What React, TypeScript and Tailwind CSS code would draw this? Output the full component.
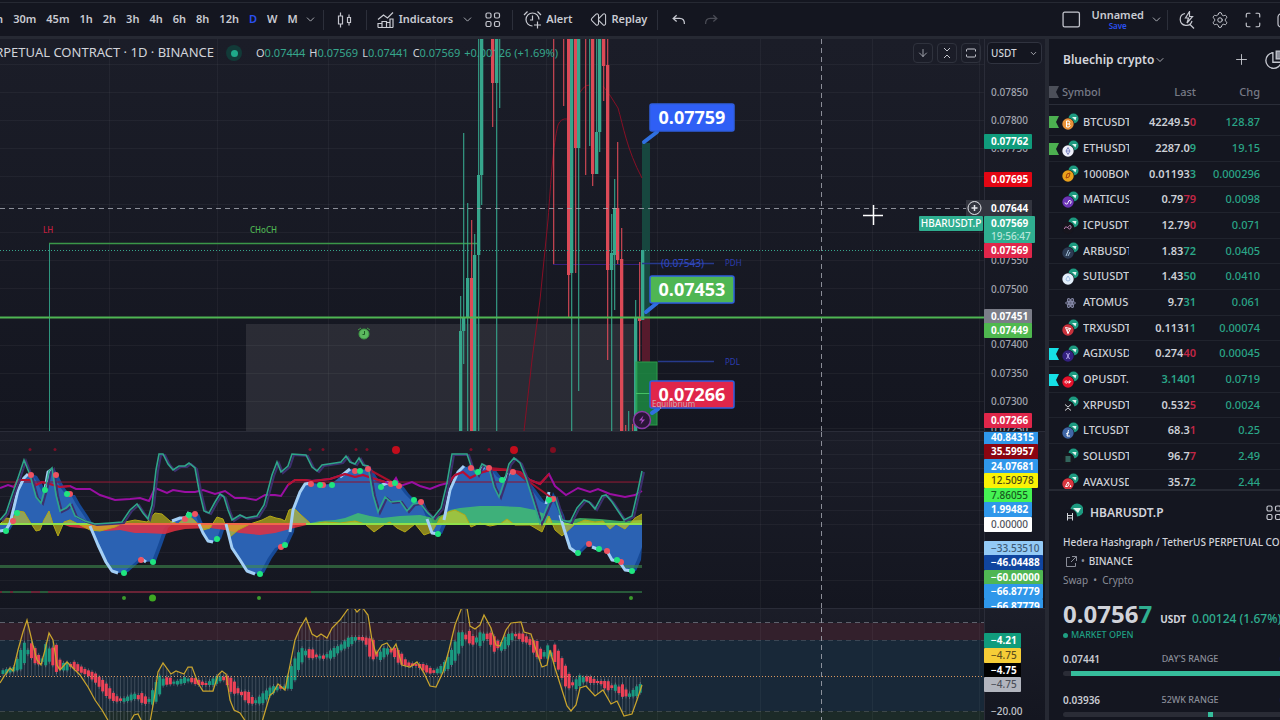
import type { ReactNode } from 'react'
import { ArrowDown, ChevronDown, Maximize, Plus, Rewind, Settings } from 'lucide-react'

type Pt = [number, number]

const UP = '#36a68c'
const DOWN = '#dc4a57'

const intervals = ['15m', '30m', '45m', '1h', '2h', '3h', '4h', '6h', '8h', '12h', 'D', 'W', 'M']

interface Ticker {
  symbol: string
  last: string
  tail: string
  tailUp: boolean
  chg: string
  flag?: string
  coin: string
  glyph?: string
  ink?: string
}

const tickers: Ticker[] = [
  { symbol: 'BTCUSDT.P', last: '42249.5', tail: '0', tailUp: false, chg: '128.87', flag: '#4caf50', coin: '#e8923a', glyph: 'M4.500 8h2.500q1.500 1.500 0 3q2 1.500 0 3H4.500zM4.500 11h3', ink: '#fff' },
  { symbol: 'ETHUSDT.P', last: '2287.0', tail: '9', tailUp: true, chg: '19.15', flag: '#4caf50', coin: '#eef0fa', glyph: 'M6 7.500L8 11L6 14.500L4 11zM4 11h4', ink: '#7b83c4' },
  { symbol: '1000BONK', last: '0.01193', tail: '3', tailUp: true, chg: '0.000296', coin: '#e9a11b', glyph: 'M4 13l1-4 3-1-1 4z', ink: '#a6400c' },
  { symbol: 'MATICUSDT', last: '0.79', tail: '79', tailUp: false, chg: '0.0098', coin: '#6d35b8', glyph: 'M3 11.500a1.500 1.500 0 1 0 3 0l1-2a1.500 1.500 0 1 1 1 3', ink: '#fff' },
  { symbol: 'ICPUSDT.P', last: '12.79', tail: '0', tailUp: false, chg: '0.071', coin: '#17151d', glyph: 'M2.500 12c0-3 3-2 3.500-1s3 2 3-1-2.500-1-3.500 1', ink: '#c98ac0' },
  { symbol: 'ARBUSDT.P', last: '1.83', tail: '72', tailUp: true, chg: '0.0405', coin: '#2b3a52', glyph: 'M4 14l2.500-6M6 14l2-4', ink: '#a7c5dd' },
  { symbol: 'SUIUSDT.P', last: '1.43', tail: '50', tailUp: true, chg: '0.0410', coin: '#e3effb', glyph: 'M6 8l2 3a2 2 0 1 1-4 0z', ink: '#9dbce2' },
  { symbol: 'ATOMUSDT', last: '9.7', tail: '31', tailUp: true, chg: '0.061', coin: 'atom' },
  { symbol: 'TRXUSDT.P', last: '0.1131', tail: '1', tailUp: true, chg: '0.00074', coin: '#c9323c', glyph: 'M3.500 8.500l5 1-2.500 5zM6 14.500l-.5-4 3-1', ink: '#fff' },
  { symbol: 'AGIXUSDT', last: '0.274', tail: '40', tailUp: false, chg: '0.00045', flag: '#16e0e6', coin: '#33207f', glyph: 'M4.500 8q3 3 0 6M7.500 8q-3 3 0 6', ink: '#b9a9f2' },
  { symbol: 'OPUSDT.P', last: '', tail: '3.1401', tailUp: true, chg: '0.0719', flag: '#16e0e6', coin: '#e5122b', glyph: 'M4.200 9.800a1.200 1.200 0 1 0 .1 0M7 12.500v-2.500h1q1.500.7 0 1.500h-1', ink: '#fff' },
  { symbol: 'XRPUSDT.P', last: '0.532', tail: '5', tailUp: false, chg: '0.0024', coin: '#16171f', glyph: 'M3 8.500l3 2.500 3-2.500M3 14.500l3-2.500 3 2.500', ink: '#d5d7dc' },
  { symbol: 'LTCUSDT.P', last: '68.3', tail: '1', tailUp: false, chg: '0.25', coin: '#3f66a5', glyph: 'M6.500 8l-1.500 6h3M4 12l3-1.500', ink: '#fff' },
  { symbol: 'SOLUSDT.P', last: '96.7', tail: '7', tailUp: false, chg: '2.49', coin: '#17181f', glyph: 'M3.500 9h5M3.500 11h5M3.500 13h5', ink: '#4fb49c' },
  { symbol: 'AVAXUSDT', last: '35.7', tail: '2', tailUp: true, chg: '2.44', coin: '#d9363f', glyph: 'M3.500 13.500L6 9l1.200 2-1.500 2.500zM8 13.500h1l-.5-1z', ink: '#fff' },
]

// [x, up, wick top, wick bottom, body top, body bottom]
const candles: [number, boolean, number, number, number, number][] = [
  [460, true, 296, 431, 331, 431],
  [463, true, 133, 364, 317, 331],
  [467, true, 203, 431, 278, 317],
  [471, false, 220, 431, 278, 431],
  [474, true, 234, 431, 255, 431],
  [478, true, 39, 431, 175, 255],
  [481, true, 39, 205, 39, 175],
  [492, false, 39, 127, 39, 83],
  [496, true, 39, 431, 39, 83],
  [499, true, 39, 108, 39, 39],
  [553, false, 39, 264, 39, 39],
  [563, false, 39, 106, 39, 39],
  [568, false, 39, 317, 39, 275],
  [571, true, 39, 431, 39, 273],
  [575, false, 39, 273, 39, 148],
  [578, true, 39, 391, 39, 148],
  [585, false, 39, 175, 39, 39],
  [589, true, 39, 146, 39, 39],
  [592, false, 39, 186, 39, 174],
  [596, true, 39, 174, 132, 174],
  [599, true, 39, 152, 39, 132],
  [603, false, 39, 101, 39, 66],
  [607, false, 39, 360, 65, 270],
  [611, true, 214, 431, 253, 270],
  [614, true, 179, 310, 208, 255],
  [617, false, 142, 264, 208, 260],
  [621, false, 228, 431, 259, 431],
  [625, false, 425, 431, 431, 431],
  [628, true, 411, 431, 431, 431],
  [632, false, 424, 431, 431, 431],
  [635, true, 300, 431, 318, 431],
  [639, false, 262, 361, 317, 321],
  [642, true, 250, 320, 250, 320],
]

const wave: Pt[] = [
  [0, 531], [6, 530], [10, 523], [14, 507], [18, 490], [24, 478], [28, 474], [33, 476], [38, 484], [42, 492], [45, 489], [48, 472],
  [51, 470], [55, 477], [60, 487], [66, 495], [71, 495], [76, 504], [84, 516], [90, 526], [98, 545], [106, 562], [112, 571], [118, 573],
  [124, 572], [132, 565], [140, 558], [146, 562], [152, 561], [158, 545], [164, 528], [172, 521], [180, 518], [186, 518], [189, 512],
  [195, 514], [199, 524], [203, 533], [208, 541], [213, 542], [217, 539], [222, 524], [226, 524], [232, 548], [240, 560], [247, 571],
  [255, 574], [260, 573], [268, 558], [275, 548], [284, 545], [290, 532], [293, 510], [300, 492], [305, 484], [311, 483], [320, 485],
  [331, 484], [340, 477], [350, 469], [360, 470], [368, 469], [375, 481], [382, 485], [390, 482], [399, 486], [405, 494], [412, 501],
  [420, 502], [427, 519], [432, 533], [438, 534], [444, 520], [450, 490], [458, 472], [464, 466], [471, 469], [478, 472], [484, 467],
  [490, 468], [497, 477], [504, 480], [510, 472], [515, 472], [524, 480], [532, 490], [540, 501], [546, 504], [549, 492], [553, 500],
  [560, 515], [564, 529], [570, 548], [577, 553], [586, 544], [592, 547], [600, 550], [607, 551], [612, 560], [619, 561], [625, 570],
  [632, 571], [637, 560], [642, 547],
]

// stretches of the wave where the leading edge is visible
const edges: [number, number][] = [[0, 28], [45, 51], [90, 118], [140, 146], [172, 189], [199, 213], [226, 255], [290, 311], [340, 350], [382, 390], [427, 438], [444, 464], [478, 484], [504, 510], [546, 549], [560, 577], [592, 600], [607, 632]]

const greenFlow: Pt[] = [
  [306, 524], [320, 521], [335, 520], [345, 518], [358, 513], [370, 516], [382, 518], [400, 516], [420, 515], [433, 518], [445, 514],
  [450, 510], [460, 508], [480, 506], [500, 506], [520, 507], [535, 510], [547, 515], [552, 520], [565, 521], [580, 518], [600, 519],
  [620, 521], [642, 520],
]

const redFlow: Pt[] = [
  [62, 524], [70, 527], [90, 529], [105, 531], [120, 530], [135, 533], [145, 533], [165, 534], [175, 531], [185, 529], [210, 528],
  [225, 530], [240, 533], [260, 535], [275, 533], [290, 529], [311, 524],
]

const vwap: Pt[] = [
  [0, 524], [6, 518], [12, 519], [18, 511], [24, 512], [30, 522], [36, 531], [40, 530], [44, 520], [49, 511], [53, 524], [58, 536],
  [64, 522], [70, 520], [78, 524], [90, 530], [100, 531], [115, 527], [125, 522], [135, 520], [147, 522], [155, 513], [162, 514],
  [170, 521], [178, 524], [188, 515], [195, 521], [203, 530], [210, 528], [217, 517], [223, 519], [230, 537], [238, 530], [250, 524],
  [262, 520], [270, 516], [276, 518], [281, 519], [285, 521], [289, 510], [294, 508], [300, 514], [311, 524], [325, 522], [340, 523],
  [355, 521], [365, 524], [374, 532], [385, 524], [390, 522], [397, 528], [405, 532], [415, 524], [424, 535], [432, 532], [440, 518],
  [448, 512], [455, 510], [465, 515], [471, 527], [480, 523], [490, 526], [500, 524], [507, 519], [515, 525], [530, 525], [542, 532],
  [549, 516], [555, 530], [562, 536], [575, 524], [585, 520], [595, 522], [603, 521], [610, 529], [616, 524], [625, 529], [635, 518],
  [642, 514],
]

const stoch: Pt[] = [
  [0, 520], [6, 513], [12, 495], [18, 478], [24, 460], [30, 475], [36, 497], [41, 503], [46, 485], [49, 471], [52, 468], [56, 495],
  [60, 511], [66, 508], [70, 504], [75, 516], [85, 521], [95, 524], [110, 523], [122, 522], [130, 510], [137, 504], [143, 513],
  [148, 519], [152, 505], [156, 470], [159, 454], [163, 454], [168, 464], [173, 470], [179, 466], [185, 466], [189, 463], [195, 468],
  [199, 490], [204, 511], [209, 513], [215, 502], [220, 494], [224, 497], [228, 510], [232, 520], [240, 515], [246, 518], [257, 516],
  [264, 505], [272, 475], [277, 462], [281, 472], [288, 466], [292, 454], [306, 455], [312, 467], [317, 471], [322, 465], [335, 463],
  [341, 462], [346, 456], [350, 462], [355, 464], [359, 458], [363, 465], [368, 466], [373, 495], [378, 512], [385, 497], [391, 502],
  [400, 501], [407, 511], [413, 504], [420, 503], [427, 512], [433, 518], [441, 508], [447, 483], [452, 454], [467, 454], [471, 466],
  [477, 475], [482, 464], [489, 468], [494, 487], [499, 497], [504, 482], [509, 464], [514, 458], [520, 463], [526, 478], [533, 500],
  [540, 523], [545, 512], [550, 500], [555, 497], [562, 520], [570, 522], [577, 508], [584, 500], [589, 502], [595, 509], [602, 496],
  [606, 495], [612, 502], [618, 511], [624, 520], [632, 516], [638, 490], [642, 471],
]

const rsi: Pt[] = [
  [0, 488], [8, 485], [14, 487], [18, 480], [24, 480], [30, 480], [36, 485], [42, 482], [50, 484], [60, 487], [70, 486], [76, 489],
  [90, 489], [100, 495], [115, 500], [130, 499], [140, 498], [149, 501], [155, 488], [160, 490], [167, 493], [173, 490], [185, 492],
  [195, 492], [203, 490], [215, 494], [225, 491], [235, 498], [245, 498], [256, 500], [265, 495], [275, 495], [281, 496], [288, 485],
  [295, 480], [305, 480], [312, 481], [330, 479], [345, 474], [355, 477], [363, 475], [372, 478], [385, 482], [392, 484], [396, 478],
  [400, 486], [412, 482], [420, 486], [430, 489], [440, 485], [448, 483], [455, 475], [463, 472], [470, 478], [480, 473], [490, 470],
  [505, 470], [520, 472], [530, 480], [540, 484], [549, 474], [555, 486], [566, 495], [578, 488], [590, 492], [598, 489], [610, 494],
  [625, 497], [635, 495], [642, 491],
]

const sellDots: Pt[] = [
  [13, 521], [31, 475], [56, 475], [70, 494], [141, 560], [195, 514], [185, 519], [281, 547], [311, 484], [323, 485], [355, 471],
  [368, 469], [391, 484], [399, 486], [421, 502], [471, 468], [489, 468], [513, 472], [553, 499], [589, 544], [607, 551], [621, 562],
]

const buyDots: Pt[] = [
  [6, 531], [17, 513], [45, 490], [67, 494], [124, 573], [153, 562], [189, 515], [217, 539], [260, 574], [285, 545], [320, 485],
  [332, 485], [360, 471], [381, 487], [395, 483], [414, 500], [438, 534], [478, 472], [502, 480], [549, 500], [578, 553], [599, 549],
  [617, 560], [632, 571],
]

const signal: Pt[] = [
  [0, 683], [5, 675], [10, 668], [13, 671], [18, 650], [23, 632], [27, 620], [33, 645], [37, 660], [41, 665], [45, 650], [49, 633],
  [53, 640], [57, 665], [60, 670], [67, 662], [73, 668], [80, 675], [88, 687], [95, 700], [102, 710], [109, 722], [130, 722],
  [134, 715], [138, 714], [142, 722], [150, 722], [154, 700], [158, 672], [163, 663], [171, 674], [176, 671], [184, 674], [188, 667],
  [192, 667], [198, 683], [203, 691], [213, 691], [218, 675], [222, 671], [226, 674], [230, 700], [234, 710], [240, 713], [246, 722],
  [262, 722], [270, 695], [273, 693], [278, 684], [285, 690], [290, 665], [295, 640], [300, 628], [306, 618], [312, 634], [317, 637],
  [321, 634], [327, 638], [332, 628], [340, 620], [348, 609], [352, 605], [357, 612], [362, 607], [368, 615], [372, 640], [376, 654],
  [382, 645], [387, 643], [392, 650], [396, 644], [402, 665], [410, 667], [417, 662], [424, 673], [430, 686], [436, 687], [443, 672],
  [449, 650], [455, 625], [462, 607], [467, 608], [470, 626], [475, 629], [480, 625], [484, 615], [491, 628], [496, 645], [500, 646],
  [506, 630], [511, 623], [521, 622], [524, 632], [531, 634], [536, 650], [542, 667], [547, 665], [550, 650], [555, 668], [562, 690],
  [567, 706], [571, 711], [576, 705], [580, 688], [586, 686], [595, 696], [603, 690], [611, 704], [617, 701], [624, 716], [632, 714],
  [637, 700], [642, 685],
]

const strength: Pt[] = [
  [0, 673], [10, 670], [17, 668], [27, 643], [33, 655], [40, 665], [45, 660], [50, 640], [56, 665], [60, 672], [68, 662], [80, 670],
  [90, 674], [100, 683], [110, 696], [118, 701], [128, 699], [137, 694], [147, 704], [152, 700], [158, 685], [163, 676], [170, 684],
  [180, 682], [188, 678], [200, 684], [210, 684], [221, 676], [228, 680], [235, 693], [243, 692], [250, 702], [257, 703], [265, 695],
  [275, 687], [287, 688], [293, 670], [300, 655], [306, 648], [313, 658], [320, 656], [327, 658], [335, 650], [345, 645], [352, 638],
  [358, 638], [368, 640], [374, 660], [382, 654], [388, 648], [395, 652], [402, 663], [410, 665], [420, 665], [428, 671], [435, 673],
  [443, 668], [450, 660], [456, 648], [463, 630], [470, 640], [475, 645], [484, 632], [492, 640], [497, 651], [503, 645], [510, 635],
  [517, 634], [526, 641], [532, 642], [538, 655], [545, 659], [550, 645], [555, 655], [562, 670], [570, 689], [576, 684], [583, 676],
  [592, 682], [603, 682], [610, 690], [618, 685], [624, 696], [632, 695], [637, 690], [642, 685],
]

const line = (pts: Pt[]) => pts.map(p => p.join(',')).join(' ')
const area = (pts: Pt[], base: number) => `${pts[0][0]},${base} ${line(pts)} ${pts[pts.length - 1][0]},${base}`
const between = (pts: Pt[], from: number, to: number) => pts.filter(p => p[0] >= from && p[0] <= to)

function valueAt(pts: Pt[], x: number) {
  const i = pts.findIndex(p => p[0] >= x)
  if (i <= 0) return pts[0][1]
  const [x0, y0] = pts[i - 1]
  const [x1, y1] = pts[i]
  return y0 + ((y1 - y0) * (x - x0)) / (x1 - x0)
}

const bars = Array.from({ length: 180 }, (_, i) => {
  const x = 3 + i * 3.56
  const open = valueAt(strength, Math.max(0, x - 5))
  const close = valueAt(strength, Math.min(642, x + 3))
  return { x, open, close, tip: valueAt(signal, Math.min(642, x)) }
})

function Grid({ rows, height }: { rows: number[]; height: number }) {
  return (
    <g stroke="#fff" strokeOpacity="0.045">
      {[109, 217, 328, 435, 546, 657, 760, 872, 979].map(x => (
        <path key={x} d={`M${x + 0.5} 0v${height}`} />
      ))}
      {rows.map(y => (
        <line key={y} x1="0" x2="100%" y1={y + 0.5} y2={y + 0.5} />
      ))}
    </g>
  )
}

interface TagProps {
  y: number
  text: string
  bg?: string
  fg?: string
  width?: number
  bold?: boolean
}

function Tag({ y, text, bg, fg = '#fff', width = 48, bold = true }: TagProps) {
  return (
    <g>
      {bg && <rect x="-1" y={y - 7} width={width} height="15" rx="1" fill={bg} />}
      <text x="6" y={y + 4} fontSize="10" fontWeight={bold ? 700 : 500} fill={fg}>
        {text}
      </text>
    </g>
  )
}

function Callout({ y, text, fill, tip }: { y: number; text: string; fill: string; tip: string }) {
  return (
    <g>
      <path d={tip} fill="none" stroke="#2f6fe0" strokeWidth="4" strokeLinecap="round" />
      <rect x="650" y={y} width="84" height="27" rx="2" fill={fill} stroke="#2f5fe0" strokeWidth="1.500" />
      <text x="692" y={y + 20} fontSize="18" fontWeight="700" fill="#fff" textAnchor="middle">
        {text}
      </text>
    </g>
  )
}

function PricePlot() {
  return (
    <svg className="h-full min-w-0 flex-1" aria-label="Price chart">
      <g transform="translate(0 -39)">
        <Grid rows={[64, 92, 120, 148, 176, 204, 232, 260, 288, 345, 373, 401, 428]} height={440} />
        <rect x="246" y="324" width="389" height="108" fill="#fff" fillOpacity="0.09" />
        <rect x="642" y="143" width="8" height="174" fill="#17473f" />
        <rect x="642" y="318" width="8" height="44" fill="#561a2c" />
        <path d="M524 431L532 360L540 300L548 220C551 180 553 145 558 125Q561 118 567 119M576 100Q583 84 590 85M603 86Q611 96 618 108C623 125 627 150 642 178" fill="none" stroke="#870f25" />
        <path d="M553 264.500H640" stroke="#33207f" />
        <path d="M49.500 431V243" stroke="#2f957e" />
        <path d="M49 243.500H478" stroke="#3b9648" strokeWidth="1.500" />
        {candles.map(([x, up, top, bottom, bodyTop, bodyBottom]) => (
          <g key={x} fill={up ? UP : DOWN}>
            <rect x={x} y={top} width="1.300" height={bottom - top} fillOpacity="0.85" />
            <rect x={x - 1} y={bodyTop} width="3.300" height={bodyBottom - bodyTop} />
          </g>
        ))}
        <line x1="0" x2="100%" y1="250.500" y2="250.500" stroke={UP} strokeDasharray="1 2" />
        <line x1="0" x2="100%" y1="317.500" y2="317.500" stroke="#4fb653" strokeWidth="2" />
        <rect x="636" y="362" width="21" height="63" fill="#1fae4d" fillOpacity="0.65" stroke="#2c9b4b" />
        <path d="M636 393.500H657" stroke="#45c065" />
        <path d="M642 263.500H714M658 361.500H714" stroke="#273a8c" strokeWidth="1.500" />
        <text x="661" y="267" fontSize="10" fill="#3149c4">(0.07543)</text>
        <text x="725" y="266" fontSize="8" fill="#2d3eb0">PDH</text>
        <text x="725" y="365" fontSize="8" fill="#2d3eb0">PDL</text>
        <text x="43" y="233" fontSize="8" fontWeight="500" fill="#c41f3f">LH</text>
        <text x="250" y="233" fontSize="8" fontWeight="500" fill="#4fb653">CHoCH</text>
        <g stroke="#3f9b45" fill="none">
          <circle cx="364" cy="334" r="5" fill="#5cb85f" />
          <path d="M358 330l3-2M370 330l-3-2" />
          <path d="M364.500 331v3.500h-2" stroke="#1d5a24" />
        </g>
        <Callout y={104} text="0.07759" fill="#2f5ff5" tip="M657 132L644 142" />
        <Callout y={276} text="0.07453" fill="#4fb653" tip="M657 303L646 312" />
        <Callout y={381} text="0.07266" fill="#e0264a" tip="M658 409L652 413" />
        <text x="652" y="407" fontSize="8" fill="#c9a6b2">Equilibrium</text>
        <circle cx="642" cy="420" r="8.500" fill="#2a1638" stroke="#8c3aa8" strokeWidth="1.500" />
        <path d="M643.500 415.500l-4.500 5h3l-1.500 4 4.500-5h-3z" fill="#a94bc4" />
        <g stroke="#a9abb5" strokeOpacity="0.8" strokeDasharray="5 4">
          <line x1="0" x2="100%" y1="208.500" y2="208.500" />
          <path d="M821.500 39V432" />
        </g>
        <path d="M863 215.500h20M873.500 205v20" stroke="#fff" strokeWidth="1.500" />
      </g>
    </svg>
  )
}

function PriceAxis() {
  const muted = '#a2a5af'
  return (
    <svg className="h-full w-[61px] shrink-0 overflow-visible border-l border-[#2a2c38]" aria-label="Price scale">
      <g transform="translate(0 -39)">
        {([[92, '0.07850'], [120, '0.07800'], [148, '0.07750'], [260, '0.07550'], [289, '0.07500'], [344, '0.07400'], [373, '0.07350'], [401, '0.07300'], [429, '0.07250']] as [number, string][]).map(([y, text]) => (
          <Tag key={y} y={y} text={text} fg={muted} bold={false} />
        ))}
        <Tag y={141} text="0.07762" bg="#109c7c" />
        <Tag y={179} text="0.07695" bg="#e30613" />
        <rect x="-19" y="200" width="66" height="16" fill="#33353f" />
        <circle cx="-10.500" cy="208" r="6.500" fill="none" stroke="#e4e5ea" />
        <path d="M-13.500 208h6M-10.500 205v6" stroke="#e4e5ea" strokeWidth="1.500" />
        <Tag y={208} text="0.07644" />
        <rect x="-66" y="216" width="64" height="15" rx="1" fill="#2fae90" />
        <text x="-34" y="227" fontSize="10" fontWeight="500" fill="#fff" textAnchor="middle">HBARUSDT.P</text>
        <rect x="-1" y="216" width="51" height="27" rx="1" fill="#2fae90" />
        <Tag y={223} text="0.07569" />
        <Tag y={236} text="19:56:47" fg="#b7e6da" bold={false} />
        <Tag y={250} text="0.07569" bg="#e0264a" />
        <Tag y={316} text="0.07451" bg="#7b7d88" />
        <Tag y={330} text="0.07449" bg="#4fb84f" />
        <Tag y={420} text="0.07266" bg="#e0264a" />
      </g>
    </svg>
  )
}

function WavePlot() {
  const shifted = wave.map(([x, y]) => [Math.min(642, x + 4), y] as Pt)
  return (
    <svg className="h-full min-w-0 flex-1" aria-label="Wave oscillator">
      <g transform="translate(0 -432)">
        <Grid rows={[440, 454, 468, 482, 496, 510, 524, 552, 580]} height={620} />
        <polygon points={area(shifted, 524)} fill="#174a97" />
        <polygon points={area(wave, 524)} fill="#2b62b3" />
        <path d="M0 482H642" stroke="#8f1530" strokeWidth="1.500" strokeOpacity="0.7" />
        <path d="M0 566.500H642" stroke="#3f8a4c" strokeWidth="3" strokeOpacity="0.6" />
        <path d="M0 592H311" stroke="#6a2336" strokeWidth="2" />
        <path d="M2 592H10M13 592H31M40 592H48M311 592H642" stroke="#285a3a" strokeWidth="2" />
        <polygon points={area(redFlow, 524)} fill="#e5303f" fillOpacity="0.85" />
        <polygon points={area(greenFlow, 524)} fill="#43c46c" fillOpacity="0.8" />
        <polygon points={area(vwap, 524)} fill="#d8cf1a" fillOpacity="0.6" />
        <polyline points={line(vwap)} fill="none" stroke="#b3a816" />
        <path d="M0 524H90M306 524H642" stroke="#8fe04a" strokeWidth="2" />
        <path d="M90 524H306" stroke="#f0664a" strokeWidth="2" />
        {edges.map(([from, to]) => (
          <polyline key={from} points={line(between(wave, from, to))} fill="none" stroke="#a4cff5" strokeWidth="3" strokeLinejoin="round" />
        ))}
        <polyline points={line(rsi)} fill="none" stroke="#9a0fa3" strokeWidth="2" />
        {([[14, 70], [288, 385], [448, 549]] as Pt[]).map(([from, to]) => (
          <polyline key={from} points={line(between(rsi, from, to))} fill="none" stroke="#b5122f" strokeWidth="2" />
        ))}
        <path d="M368 469L399 486M489 468L513 470L553 499" stroke="#a8102b" strokeWidth="2" fill="none" />
        <polyline points={line(stoch)} fill="none" stroke="#3d2f6e" strokeWidth="2" transform="translate(2 1)" />
        <polyline points={line(stoch)} fill="none" stroke="#2fa58a" strokeWidth="1.600" />
        {sellDots.map(([x, y]) => <circle key={x} cx={x} cy={y} r="3" fill="#ee5361" />)}
        {buyDots.map(([x, y]) => <circle key={x} cx={x} cy={y} r="3" fill="#1fe57f" />)}
        {[30, 55, 310, 323, 356, 367, 471, 489].map(x => <circle key={x} cx={x} cy="449.500" r="1.500" fill="#7a1028" />)}
        <circle cx="396" cy="450" r="4" fill="#c20d1c" />
        <circle cx="514" cy="450" r="4" fill="#c20d1c" />
        <circle cx="553" cy="450" r="3" fill="#7f0e20" />
        {[124, 259, 631].map(x => <circle key={x} cx={x} cy="598" r="2" fill="#3c9a2c" />)}
        <circle cx="152.500" cy="598" r="3.500" fill="#3fa822" />
        <path d="M821.500 432V609" stroke="#a9abb5" strokeOpacity="0.8" strokeDasharray="5 4" />
      </g>
    </svg>
  )
}

function WaveAxis() {
  return (
    <svg className="h-full w-[61px] shrink-0 overflow-visible border-l border-[#2a2c38]" aria-label="Oscillator scale">
      <g transform="translate(0 -432)">
        <Tag y={437} text="40.84315" bg="#2f97ea" width={54} />
        <Tag y={451} text="35.59957" bg="#8b0510" width={54} />
        <Tag y={466} text="24.07681" bg="#2f97ea" width={54} />
        <Tag y={480} text="12.50978" bg="#fbf306" fg="#4a4812" width={54} bold={false} />
        <Tag y={495} text="7.86055" bg="#45f353" fg="#175a1e" bold={false} />
        <Tag y={509} text="1.99482" bg="#2f97ea" />
        <Tag y={524} text="0.00000" bg="#fff" fg="#50525c" bold={false} />
        <Tag y={548} text="−33.53510" bg="#93caf6" fg="#3e5a74" width={59} bold={false} />
        <Tag y={562} text="−46.04488" bg="#10459f" width={59} />
        <Tag y={577} text="−60.00000" bg="#4fb653" width={59} />
        <Tag y={591} text="−66.87779" bg="#2f97ea" width={59} />
        <Tag y={606} text="−66.87779" bg="#2f97ea" width={59} />
      </g>
    </svg>
  )
}

function StrengthPlot() {
  return (
    <svg className="h-full min-w-0 flex-1" aria-label="Relative strength">
      <g transform="translate(0 -609)">
        <rect y="623" width="100%" height="17" fill="#33202c" />
        <rect y="640" width="100%" height="71" fill="#182838" />
        <rect y="711" width="100%" height="12" fill="#1c2a28" />
        <Grid rows={[]} height={730} />
        <g stroke="#7b7f8a" strokeOpacity="0.7" strokeDasharray="5 4">
          <line x1="0" x2="100%" y1="622.500" y2="622.500" />
          <line x1="0" x2="100%" y1="640.500" y2="640.500" strokeOpacity="0.35" />
          <line x1="0" x2="100%" y1="711.500" y2="711.500" strokeOpacity="0.35" />
        </g>
        {bars.map(({ x, open, close, tip }) => {
          const up = close < open
          return (
            <g key={x}>
              <path d={`M${x} 676.500V${tip}`} stroke="#a5abb8" strokeOpacity="0.28" />
              <path d={`M${x} ${Math.min(open, close) - 3}V${Math.max(open, close) + 3}`} stroke="#a5abb8" strokeOpacity="0.4" />
              <rect x={x - 1.5} y={Math.min(open, close) - 1} width="3" height={Math.abs(close - open) + 2} fill={up ? '#1a9a80' : '#ee4257'} />
            </g>
          )
        })}
        <line x1="0" x2="100%" y1="676.500" y2="676.500" stroke="#d9985f" strokeDasharray="1 2" />
        <polyline points={line(signal)} fill="none" stroke="#c9a42c" strokeWidth="1.250" />
        <path d="M821.500 609V722" stroke="#a9abb5" strokeOpacity="0.8" strokeDasharray="5 4" />
      </g>
    </svg>
  )
}

function StrengthAxis() {
  return (
    <svg className="h-full w-[61px] shrink-0 overflow-visible border-l border-[#2a2c38]" aria-label="Strength scale">
      <g transform="translate(0 -609)">
        <Tag y={640} text="−4.21" bg="#109c7c" width={37} />
        <Tag y={655} text="−4.75" bg="#f5cd37" fg="#5d4f1c" width={37} bold={false} />
        <Tag y={670} text="−4.75" bg="#000" width={37} />
        <Tag y={684} text="−4.75" bg="#b2b5be" fg="#4d505a" width={37} bold={false} />
        <Tag y={711} text="−20.00" fg="#c3c5cc" bold={false} />
      </g>
    </svg>
  )
}

function Icon({ label, size = 18, children }: { label: string; size?: number; children: ReactNode }) {
  return (
    <button type="button" aria-label={label} className="shrink-0 text-[#c5c7cf]">
      <svg width={size} height={size} viewBox="0 0 18 18" fill="none" stroke="currentColor" strokeWidth="1.200">
        {children}
      </svg>
    </button>
  )
}

const fourSquares = (
  <>
    <rect x="2" y="2" width="5" height="5" rx="1.500" />
    <rect x="10.500" y="2" width="5" height="5" rx="1.500" />
    <rect x="2" y="10.500" width="5" height="5" rx="1.500" />
    <rect x="10.500" y="10.500" width="5" height="5" rx="1.500" />
  </>
)

function Divider() {
  return <span className="h-5 w-px shrink-0 bg-[#2c2f3a]" />
}

function TopBar() {
  return (
    <header className="h-[39px] shrink-0 overflow-hidden border-b-[3px] border-[#262933] bg-[#141620] pt-[2px]">
      <div className="flex h-full items-center border-t border-[#262933] text-[11px] font-semibold whitespace-nowrap text-[#c9cbd2]">
        <nav className="-ml-5 flex gap-[10px]">
          {intervals.map(name => (
            <button key={name} type="button" className={name === 'D' ? 'text-[#2b50f0]' : ''}>
              {name}
            </button>
          ))}
        </nav>
        <button type="button" aria-label="More intervals" className="ml-[6px]"><ChevronDown size={13} strokeWidth={1.5} /></button>
        <div className="ml-[6px] flex items-center gap-3">
          <Divider />
          <Icon label="Candles">
            <path d="M2.500 5h4v8h-4zM4.500 1.500V5M4.500 13v3.500M11.500 6.500h3v5h-3zM13 3.500v3M13 11.500v3" />
          </Icon>
          <Divider />
        </div>
        <button type="button" className="ml-[10px] flex items-center gap-1">
          <svg width="18" height="18" viewBox="0 0 18 18" fill="none" stroke="currentColor" strokeWidth="1.200">
            <path d="M1 16.500v-4h4v4M5 16.500v-6h4.500v6M9.500 16.500v-5H13v5M13 16.500V8h3v8.500M1 16.500h15M1 8.500L6.500 4l4 3L16 1.500" />
          </svg>
          Indicators
        </button>
        <button type="button" aria-label="Indicator favourites" className="ml-2"><ChevronDown size={13} strokeWidth={1.5} /></button>
        <div className="ml-[10px] flex items-center gap-[10px]">
          <Icon label="Layout templates">{fourSquares}</Icon>
          <Divider />
          <button type="button" className="flex items-center gap-1">
            <svg width="19" height="19" viewBox="0 0 19 19" fill="none" stroke="currentColor" strokeWidth="1.200">
              <path d="M16 9.500A6.500 6.500 0 1 0 9.500 16M9.500 5.500v4.500H7M1 5l3.500-3.500M18 5l-3.500-3.500M14.500 11.500v7M11 15h7" />
            </svg>
            Alert
          </button>
        </div>
        <button type="button" className="ml-[18px] flex items-center gap-1">
          <Rewind size={17} strokeWidth={1.5} />
          Replay
        </button>
        <div className="ml-[10px] flex items-center gap-[14px]">
          <Divider />
          <Icon label="Undo" size={14}>
            <path d="M6 3L1.500 7L6 11M1.500 7H10Q16 7 16 14" strokeWidth="1.600" />
          </Icon>
          <span className="ml-1 flex opacity-30">
            <Icon label="Redo" size={14}>
              <path d="M12 3L16.500 7L12 11M16.500 7H8Q2 7 2 14" strokeWidth="1.600" />
            </Icon>
          </span>
        </div>
        <div className="-mr-[15px] ml-auto flex shrink-0 items-center">
          <Icon label="Layout" size={19}><rect x="1" y="2" width="15.500" height="14" rx="1.500" /></Icon>
          <button type="button" className="ml-[10px] flex flex-col items-center text-[11px] leading-[12px]">
            Unnamed
            <span className="text-[8px] leading-[9px] text-[#2b50f0]">Save</span>
          </button>
          <button type="button" aria-label="Manage layouts" className="ml-[6px]"><ChevronDown size={13} strokeWidth={1.5} /></button>
          <span className="ml-1 flex"><Divider /></span>
          <div className="ml-[10px] flex items-center gap-[15px]">
            <Icon label="Quick search">
              <path d="M7 2.500a6 6 0 1 0 7 7.500M12 13.500l4 4M11.500 0.500L7.500 7h3l-1.500 5 5.500-6.500h-3z" />
            </Icon>
            <button type="button" aria-label="Settings"><Settings size={18} strokeWidth={1.3} /></button>
            <button type="button" aria-label="Full screen"><Maximize size={18} strokeWidth={1.5} /></button>
            <Icon label="Snapshot"><rect x="1" y="3" width="16" height="13" rx="3" /><circle cx="9" cy="9" r="3" /></Icon>
          </div>
        </div>
      </div>
    </header>
  )
}

function Legend() {
  const ohlc = [['O', '0.07444'], ['H', '0.07569'], ['L', '0.07441'], ['C', '0.07569']]
  return (
    <div className="absolute top-1 left-0 flex h-5 items-center whitespace-nowrap text-[#d1d3da]">
      <h1 className="flex w-[214px] justify-end overflow-hidden text-[13px] font-normal">PERPETUAL CONTRACT · 1D · BINANCE</h1>
      <span className="ml-3 flex size-4 items-center justify-center rounded-full bg-[#123a38]">
        <span className="size-[7px] rounded-full bg-[#1faa8a]" />
      </span>
      <dl className="ml-[14px] flex gap-1 text-[11px]">
        {ohlc.map(([key, value]) => (
          <div key={key} className="flex">
            <dt>{key}</dt>
            <dd className="text-[#36a68c]">{value}</dd>
          </div>
        ))}
        <dd className="text-[#36a68c]">+0.00126 (+1.69%)</dd>
      </dl>
    </div>
  )
}

function PaneButtons() {
  const box = 'flex h-5 w-5 items-center justify-center rounded border border-[#2f323d] text-[#c5c7cf]'
  return (
    <div className="absolute top-1 right-16 flex gap-1">
      <button type="button" aria-label="Move pane down" className={box}><ArrowDown size={12} strokeWidth={1.5} /></button>
      <button type="button" aria-label="Collapse pane" className={box}>
        <svg width="12" height="12" viewBox="0 0 12 12" fill="none" stroke="currentColor"><path d="M3 1l3 3 3-3M3 11l3-3 3 3" /></svg>
      </button>
      <button type="button" aria-label="Maximize pane" className={box}>
        <svg width="12" height="12" viewBox="0 0 12 12" fill="none" stroke="currentColor"><path d="M1.500 4.500V3q0-1 1-1h7q1 0 1 1v1.500M1.500 7.500V9q0 1 1 1h7q1 0 1-1V7.500" /></svg>
      </button>
    </div>
  )
}

function Coin({ coin, glyph, ink }: { coin: string; glyph?: string; ink?: string }) {
  if (coin === 'atom') {
    return (
      <svg width="18" height="18" viewBox="0 0 18 18" fill="#8689a8" fillOpacity="0.35" stroke="#8689a8">
        <ellipse cx="8.500" cy="9" rx="5" ry="1.700" />
        <ellipse cx="8.500" cy="9" rx="5" ry="1.700" transform="rotate(60 8.500 9)" />
        <ellipse cx="8.500" cy="9" rx="5" ry="1.700" transform="rotate(120 8.500 9)" />
      </svg>
    )
  }
  return (
    <svg width="18" height="18" viewBox="0 0 18 18">
      <circle cx="11.500" cy="5.500" r="5" fill="#1d9a80" />
      <path d="M10 4h4.500L13.500 7.500z" fill="#e3f7f1" />
      <circle cx="6" cy="11" r="6.200" fill="#141620" />
      <circle cx="6" cy="11" r="5.700" fill={coin} />
      <path d={glyph} fill="none" stroke={ink} />
    </svg>
  )
}

function Flag({ color }: { color: string }) {
  return (
    <svg width="10" height="12" viewBox="0 0 10 12">
      <path d="M0 0h10L7 6l3 6H0z" fill={color} />
    </svg>
  )
}

function Watchlist() {
  return (
    <section className="h-[450px] shrink-0 overflow-hidden">
      <div className="flex h-[41px] items-center pl-[14px] text-[#d5d7dd]">
        <button type="button" className="flex items-center text-[12px] font-semibold">
          Bluechip crypto
          <ChevronDown size={12} strokeWidth={1.5} />
        </button>
        <button type="button" aria-label="Add symbol" className="ml-auto"><Plus size={17} strokeWidth={1.2} /></button>
        <span className="-mr-1 ml-[14px] flex">
          <Icon label="Advanced view" size={20}>
            <path d="M8 2.500a7 7 0 1 0 7.500 8.500H8z" />
            <path d="M11 1v7h6V1z" fill="#8d909b" />
          </Icon>
        </span>
      </div>
      <table className="w-[231px] table-fixed text-[11px] font-semibold">
        <colgroup>
          <col className="w-[13px]" />
          <col className="w-[21px]" />
          <col className="w-[46px]" />
          <col className="w-[67px]" />
          <col className="w-16" />
          <col />
        </colgroup>
        <thead className="border-b border-[#2a2d38] text-[#777a86]">
          <tr className="h-6">
            <th><Flag color="#4c4f59" /></th>
            <th colSpan={2} className="text-left font-medium">Symbol</th>
            <th className="text-right font-medium">Last</th>
            <th className="text-right font-medium">Chg</th>
            <th />
          </tr>
        </thead>
        <tbody className="before:block before:h-[5px] [&>tr]:h-[26px] [&>tr:nth-child(3n)]:h-[25px]">
          {tickers.map(row => (
            <tr key={row.symbol} className="border-b border-[#20232d]">
              <td>{row.flag && <Flag color={row.flag} />}</td>
              <td><span className="flex"><Coin coin={row.coin} glyph={row.glyph} ink={row.ink} /></span></td>
              <td className="overflow-hidden font-medium whitespace-nowrap text-[#cdd0d7]">{row.symbol}</td>
              <td className="text-right text-[#cdd0d7]">
                {row.last}
                <span className={row.tailUp ? 'text-[#2aa587]' : 'text-[#c22646]'}>{row.tail}</span>
              </td>
              <td className="text-right font-medium text-[#2aa587]">{row.chg}</td>
              <td />
            </tr>
          ))}
        </tbody>
      </table>
    </section>
  )
}

function Range({ low, high, label, children }: { low: string; high: string; label: string; children: ReactNode }) {
  return (
    <div className="mb-[17px] w-[254px]">
      <div className="flex h-[14px] items-center justify-between text-[10px] font-semibold text-[#c9cbd2]">
        <span>{low}</span>
        <span className="text-[9px] font-medium text-[#8a8d98]">{label}</span>
        <span>{high}</span>
      </div>
      <div className="mt-[5px] flex h-[5px] rounded-sm bg-[#2a2c36]">{children}</div>
    </div>
  )
}

function Details() {
  return (
    <section className="min-h-0 flex-1 overflow-hidden border-t-2 border-[#262933] pl-[14px] whitespace-nowrap text-[#d1d3da]">
      <div className="mt-3 flex h-5 items-center">
        <svg width="20" height="20" viewBox="0 0 20 20" fill="none">
          <circle cx="14" cy="7" r="6.500" fill="#1d9a80" />
          <path d="M10 5h8l-3 5z" fill="#e3f7f1" />
          <circle cx="7" cy="13" r="7" fill="#141620" />
          <path d="M4.500 10v7.500M9.500 10v7.500M4.500 12.500h5M4.500 15h5" stroke="#d5d7dc" />
        </svg>
        <h2 className="ml-[7px] text-[12px] font-semibold">HBARUSDT.P</h2>
        <span className="-mr-[3px] ml-auto flex"><Icon label="Symbol layouts">{fourSquares}</Icon></span>
      </div>
      <p className="mt-[10px] text-[10px] leading-[19px] font-medium">Hedera Hashgraph / TetherUS PERPETUAL CONTRACT</p>
      <p className="flex items-center gap-1 text-[10px] leading-[19px] font-medium">
        <a href="#exchange" aria-label="Open exchange" className="ml-[2px] text-[#8a8d98]">
          <svg width="12" height="12" viewBox="0 0 12 12" fill="none" stroke="currentColor">
            <path d="M5 1.500H1.500v9h9V7M7 .5h4.500V5M11.500.5L6 6" />
          </svg>
        </a>
        <span className="text-[#8a8d98]">•</span>
        <span>BINANCE</span>
      </p>
      <p className="text-[10px] leading-[18px] text-[#8a8d98]">Swap&nbsp; •&nbsp; Crypto</p>
      <p className="mt-[9px] flex h-[30px] items-baseline leading-[32px]">
        <span className="text-[24px] font-bold">0.0756<span className="text-[#2fae90]">7</span></span>
        <span className="ml-2 text-[10px] font-bold">USDT</span>
        <span className="ml-[6px] text-[12px] font-medium text-[#2fae90]">0.00124 (1.67%)</span>
      </p>
      <p className="mb-[10px] flex items-center gap-[3px] text-[9px] leading-[14px] font-medium text-[#1f9f82]">
        <span className="size-[5px] rounded-full bg-[#1f9f82]" />
        MARKET OPEN
      </p>
      <Range low="0.07441" high="0.07759" label="DAY'S RANGE">
        <span className="ml-2 flex-1 bg-[#36bd9c]" />
      </Range>
      <Range low="0.03936" high="0.10140" label="52WK RANGE">
        <span className="ml-[57%] w-[5px] bg-[#36bd9c]" />
      </Range>
    </section>
  )
}

export default function App() {
  const pane = 'relative flex overflow-hidden bg-linear-to-b from-[#1b1d28] to-[#141620]'
  return (
    <div className="flex h-screen flex-col overflow-hidden bg-[#141620] font-['Noto_Sans',sans-serif]">
      <TopBar />
      <div className="flex min-h-0 flex-1">
        <main className="flex min-w-0 flex-1 flex-col">
          <section className={`${pane} min-h-0 flex-1`}>
            <PricePlot />
            <PriceAxis />
            <Legend />
            <PaneButtons />
            <div className="absolute top-[3px] right-[3px] flex">
              <select aria-label="Currency" className="h-[22px] w-[55px] appearance-none rounded border border-[#30333f] bg-[#141620] pl-[3px] text-[10px] font-medium text-[#d1d3da]">
                <option>USDT</option>
              </select>
              <ChevronDown size={9} className="pointer-events-none absolute top-[7px] right-1 text-[#d1d3da]" />
            </div>
          </section>
          <section className={`${pane} h-[177px] shrink-0 border-t border-[#2a2c38]`}>
            <WavePlot />
            <WaveAxis />
          </section>
          <section className={`${pane} h-[112px] shrink-0 border-t border-[#2a2c38]`}>
            <StrengthPlot />
            <StrengthAxis />
          </section>
        </main>
        <div className="w-1 shrink-0 bg-[#262933]" />
        <aside className="flex w-[231px] shrink-0 flex-col overflow-hidden bg-[#141620]">
          <Watchlist />
          <Details />
        </aside>
      </div>
    </div>
  )
}
